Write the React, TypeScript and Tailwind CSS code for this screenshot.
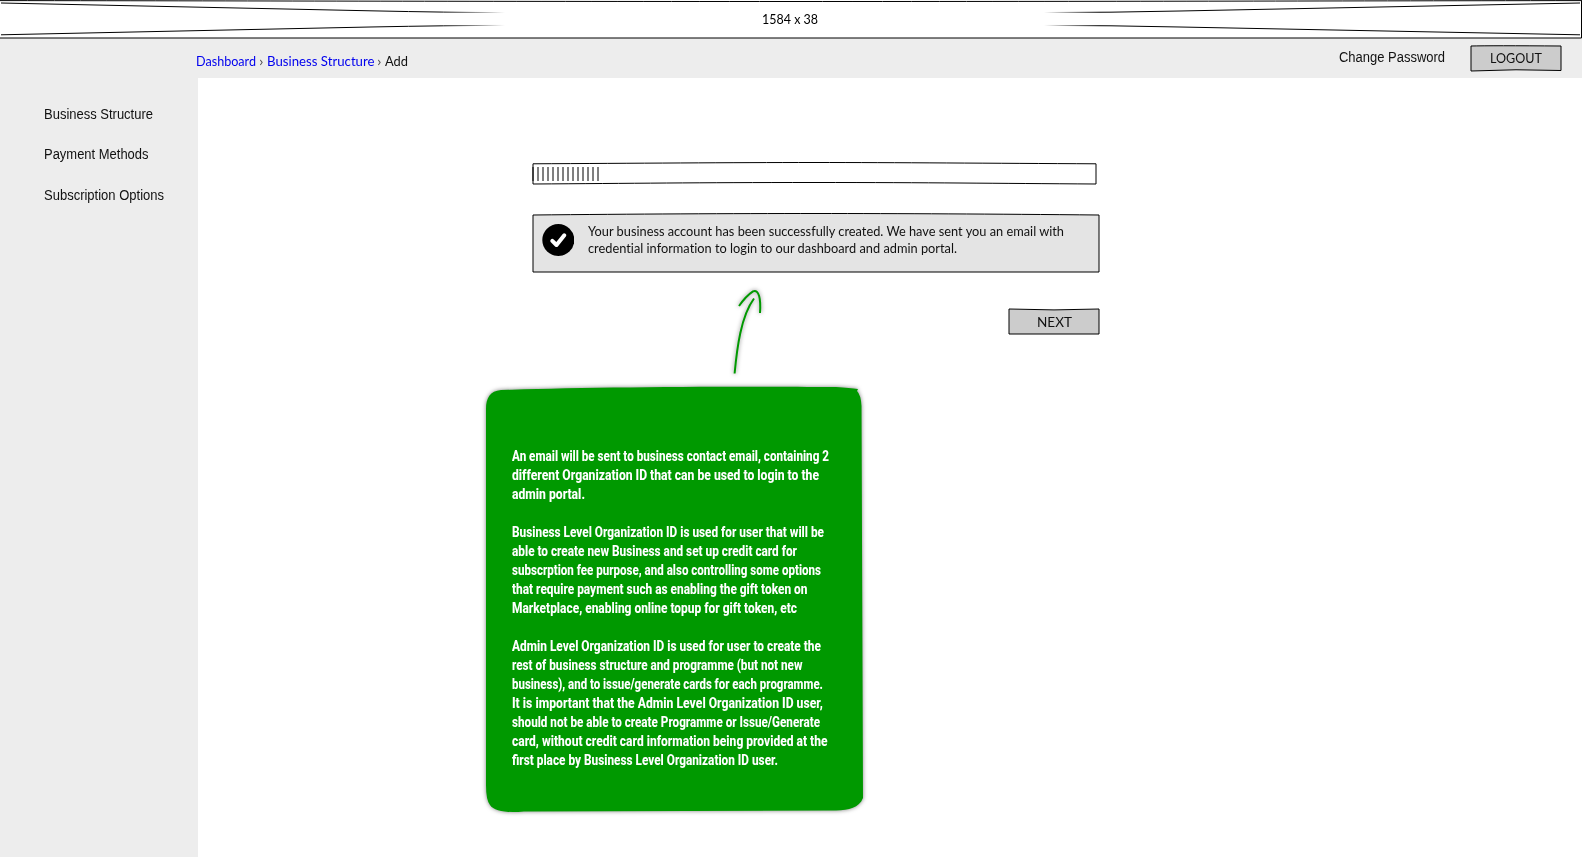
import { useLayoutEffect, useRef, useState } from "react";
import type { ReactNode } from "react";

/** A single line of text that is fitted to an exact width. */
function Line({ w, className = "", children }: { w: number; className?: string; children: ReactNode }) {
  const ref = useRef<HTMLSpanElement>(null);
  const [scale, setScale] = useState(1);
  useLayoutEffect(() => {
    if (ref.current) setScale(w / ref.current.getBoundingClientRect().width * scale);
  }, [w]);
  return (
    <span className={"block shrink-0 whitespace-nowrap " + className} style={{ width: w }}>
      <span ref={ref} className="inline-block origin-left" style={{ transform: `scaleX(${scale})` }}>
        {children}
      </span>
    </span>
  );
}

const sketch = "font-['Lato','Open_Sans',sans-serif] [font-variant-ligatures:none]";
const arial = "font-['Liberation_Sans',Arial,sans-serif]";

const note: [string, number][][] = [
  [
    ["An email will be sent to business contact email, containing 2", 317],
    ["different Organization ID that can be used to login to the", 307],
    ["admin portal.", 73],
  ],
  [
    ["Business Level Organization ID is used for user that will be", 312],
    ["able to create new Business and set up credit card for", 285],
    ["subscrption fee purpose, and also controlling some options", 309],
    ["that require payment such as enabling the gift token on", 295.5],
    ["Marketplace, enabling online topup for gift token, etc", 285],
  ],
  [
    ["Admin Level Organization ID is used for user to create the", 309],
    ["rest of business structure and programme (but not new", 290.5],
    ["business), and to issue/generate cards for each programme.", 311],
    ["It is important that the Admin Level Organization ID user,", 311],
    ["should not be able to create Programme or Issue/Generate", 308],
    ["card, without credit card information being provided at the", 315.5],
    ["first place by Business Level Organization ID user.", 266],
  ],
];

function Placeholder() {
  return (
    <header className="relative flex h-[38px] items-center justify-center bg-white pr-0.5">
      <svg className="absolute inset-0" width="1582" height="40" fill="none">
        <defs>
          <linearGradient id="fl" gradientUnits="userSpaceOnUse" x1="440" y1="0" x2="505" y2="0">
            <stop offset="0" stopColor="#000" />
            <stop offset="1" stopColor="#000" stopOpacity="0" />
          </linearGradient>
          <linearGradient id="fr" gradientUnits="userSpaceOnUse" x1="1044" y1="0" x2="1100" y2="0">
            <stop offset="0" stopColor="#000" stopOpacity="0" />
            <stop offset="1" stopColor="#000" />
          </linearGradient>
        </defs>
        <path d="M0 .6C300 .9 450 1.5 791 1.5S1300 .9 1582 .6" stroke="#000" />
        <path d="M0 38H1581.5V1" stroke="#000" />
        <path d="M1 3L370 10.8Q450 12.5 505 12.6M1 34.8L370 27Q450 25.4 505 25.4" stroke="url(#fl)" />
        <path d="M1044 12.5Q1110 12.6 1180 11L1580 3M1044 25.4Q1110 25.4 1180 27L1580 34.8" stroke="url(#fr)" />
      </svg>
      <Line w={56} className={`${sketch} text-[13px] leading-[38px] text-black`}>1584 x 38</Line>
    </header>
  );
}

function SketchButton({ label, w, flip = false }: { label: string; w: number; flip?: boolean }) {
  return (
    <button className={`relative flex h-[26px] w-[90px] items-center justify-center ${sketch} pt-px text-[13px] leading-[17px] text-[#111]`}>
      <svg className="absolute inset-0 overflow-visible" width="90" height="26">
        {flip ? (
          <path d="M0 0Q45 1.8 90 0V25H0Z" fill="#ccc" stroke="#000" />
        ) : (
          <path d="M0 1Q20 .5 90 1V25.5Q45 23.8 0 26Z" fill="#ccc" stroke="#000" />
        )}
      </svg>
      <Line w={w} className="relative">{label}</Line>
    </button>
  );
}

function Progress() {
  return (
    <svg className="block overflow-visible" width="563" height="21" fill="none" stroke="#000">
      <path d="M0 .8C100 .3 200 -.5 281 -.5S460 .3 563 .8V21C460 20.4 400 19.5 281 19.5S100 20.4 0 21Z" />
      {Array.from({ length: 14 }, (_, i) => (
        <path key={i} d={`M${i * 5} 4V18`} />
      ))}
    </svg>
  );
}

function Alert() {
  return (
    <div className="relative mt-[30px] flex h-[58px] w-[566px] pl-[9px] pt-[9px]">
      <svg className="absolute inset-0 overflow-visible" width="566" height="58">
        <path d="M0 1C100 0 200 -.5 283 -.5S460 0 566 1V58H0Z" fill="#e4e4e4" stroke="#000" />
      </svg>
      <svg className="relative mt-px shrink-0" width="32" height="32" fill="none">
        <circle cx="16.3" cy="16" r="16" fill="#000" />
        <path d="M10.3 16.8L14.5 21L22.3 11.3" stroke="#fff" strokeWidth="4" strokeLinecap="round" strokeLinejoin="round" />
      </svg>
      <div className={`relative ml-[14px] ${sketch} text-[13px] leading-[17px] text-[#111]`}>
        <Line w={476}>Your business account has been successfully created. We have sent you an email with</Line>
        <Line w={369}>credential information to login to our dashboard and admin portal.</Line>
      </div>
    </div>
  );
}

function Annotation() {
  return (
    <aside className="absolute left-[486px] top-[290px] h-[524px] w-[378px] pl-[26px] pt-[157px]">
      <svg className="absolute inset-0 overflow-visible drop-shadow-[0_0_2px_rgba(0,0,0,0.5)]" width="378" height="524" fill="none">
        <path
          d="M0 119C0 108 4 101 15 100C90 97 250 96 350 97Q364 98 372 99L371 101Q375 105 375.5 116L377 508C373 518 363 520 350 520.5L38 521.5Q10 524 4 515Q0 510 0 495Z"
          fill="#090"
        />
        <path d="M248.6 83.5C251 58 255 26 268 8.5M253 16Q260 6 267 1.4C273-1 275 9 274 23" stroke="#090" strokeWidth="2" />
      </svg>
      <div className="relative flex flex-col gap-[19px] font-['Roboto','Liberation_Sans',sans-serif] text-[15px] font-extrabold leading-[19px] text-white">
        {note.map((para, i) => (
          <div key={i}>
            {para.map(([text, w]) => (
              <Line key={text} w={w}>{text}</Line>
            ))}
          </div>
        ))}
      </div>
    </aside>
  );
}

export default function App() {
  return (
    <div className="relative flex h-[857px] w-[1582px] flex-col overflow-hidden bg-white">
      <Placeholder />
      <div className="flex h-10 shrink-0 items-start bg-[#ededed]">
        <nav className={`ml-[196px] mt-[15px] flex ${sketch} text-[13px] leading-[17px] text-[#0000ee]`}>
          <Line w={60}>Dashboard</Line>
          <Line w={4.5} className="ml-[3px] text-[#555]">›</Line>
          <Line w={107.5} className="ml-[3px]">Business Structure</Line>
          <Line w={4.5} className="ml-[3px] text-[#555]">›</Line>
          <Line w={23} className="ml-[3.5px] text-[#111]">Add</Line>
        </nav>
        <Line w={106} className={`ml-auto mt-[12px] ${arial} text-[14px] leading-[15px] text-[#111]`}>Change Password</Line>
        <div className="ml-[26px] mr-[21px] mt-[7px]">
          <SketchButton label="LOGOUT" w={52} />
        </div>
      </div>
      <div className="flex grow">
        <aside className={`flex w-[198px] flex-col gap-[25.5px] bg-[#ededed] pl-11 pt-[28.5px] ${arial} text-[14px] leading-[15px] text-[#111]`}>
          <Line w={109}>Business Structure</Line>
          <Line w={104.5}>Payment Methods</Line>
          <Line w={120}>Subscription Options</Line>
        </aside>
        <main className="ml-[335px] mt-[85px] w-[566px]">
          <Progress />
          <Alert />
          <div className="mt-[37px] flex justify-end">
            <SketchButton label="NEXT" w={35} flip />
          </div>
        </main>
      </div>
      <Annotation />
    </div>
  );
}
